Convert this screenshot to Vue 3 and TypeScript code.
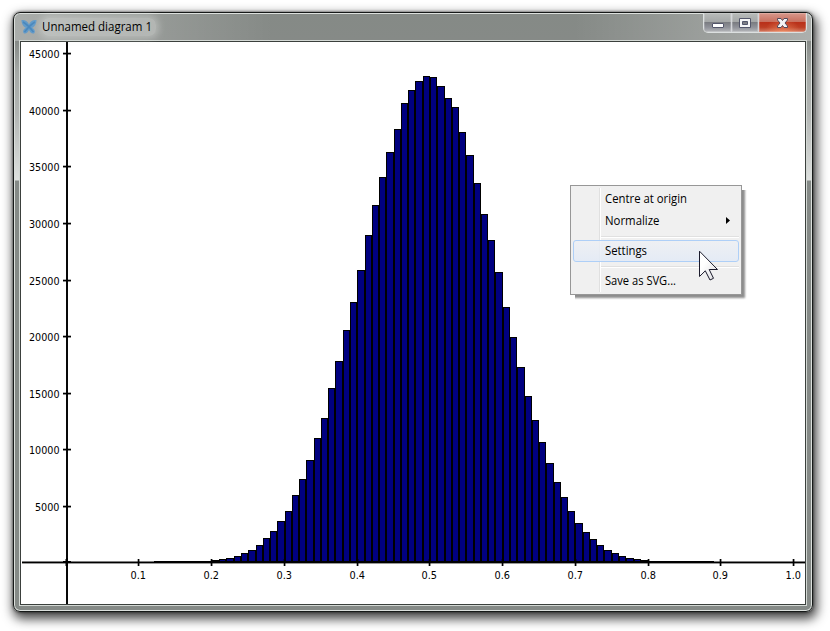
<script setup lang="ts">
const baseline = 562
const xAt = (bin: number) => Math.ceil(66 + 7.27 * bin)

const tops: number[] = [
  560, 559, 558, 556, 553, 550, 545, 538, 531, 521,
  511, 495, 479, 460, 438, 418, 388, 361, 330, 302,
  270, 235, 205, 177, 152, 129, 103, 90, 81, 76,
  77, 86, 98, 107, 132, 155, 183, 214, 240, 272,
  307, 337, 367, 396, 420, 442, 463, 482, 497, 511,
  523, 532, 539, 545, 550, 553, 556, 558, 559, 560,
]

const bars = tops.map((y, i) => {
  const x = xAt(20 + i)
  return { x, y, width: xAt(21 + i) - x, height: baseline - y }
})

const yTicks = [53, 110, 166, 223, 280, 336, 393, 449, 506].map((y, i) => {
  const value = 45000 - i * 5000
  return { value, y, width: value > 5000 ? 30.5 : 24.5 }
})

const xTicks = Array.from({ length: 10 }, (_, i) => ({
  label: ((i + 1) / 10).toFixed(1),
  x: Math.floor(66 + 72.75 * (i + 1)),
}))
</script>

<template>
  <main class="desktop">
    <section class="window">
      <header class="titlebar">
        <svg class="logo" width="16" height="16" viewBox="0 0 16 16">
          <path d="M.5 1 C4 .5 7 2.500 8 5.500 C9 2.500 12 .5 15.500 1 C15.500 5 13.500 8 11 8.800 C13.500 10 14.500 12 13.500 14 C11.500 15.500 9 13.500 8 11 C7 13.500 4.500 15.500 2.500 14 C1.500 12 2.500 10 5 8.800 C2.500 8 .5 5 .5 1Z" fill="#639bc9" />
          <path d="M2 3 Q7 6 12.500 13 M14 3 Q9 6 3.500 13" fill="none" stroke="#4a88bd" stroke-width="1.500" />
        </svg>
        <h1 class="title">
          <svg width="114" height="18"><text x="0" y="13" textLength="110" lengthAdjust="spacingAndGlyphs">Unnamed diagram 1</text></svg>
        </h1>
        <div class="controls">
          <button class="control minimize" aria-label="Minimize">
            <svg width="28" height="18"><rect x="8.500" y="9.500" width="11" height="4" rx=".5" fill="#fff" stroke="#53566a" /></svg>
          </button>
          <button class="control maximize" aria-label="Maximize">
            <svg width="26" height="18">
              <path fill-rule="evenodd" d="M7.500 4.500 H18.500 V13.500 H7.500Z M10.500 7.500 V10.500 H15.500 V7.500Z" fill="#f5f5f5" stroke="#53566a" />
            </svg>
          </button>
          <button class="control close" aria-label="Close">
            <svg width="46" height="18">
              <path d="M18.500 4.500 H22 L23.500 6.500 L25 4.500 H28.500 V6 L26 9 L28.500 12 V13.500 H25 L23.500 11.500 L22 13.500 H18.500 V12 L21 9 L18.500 6Z" fill="#f4f4f4" stroke="#55495a" />
            </svg>
          </button>
        </div>
      </header>

      <div class="client">
        <svg class="chart" width="784" height="562" viewBox="21 42 784 562">
          <g shape-rendering="crispEdges">
            <rect x="22" y="561" width="783" height="1" fill="#7f7f7f" />
            <rect x="22" y="562" width="783" height="1" />
            <rect x="22" y="563" width="783" height="1" fill-opacity=".4" />
            <rect x="66" y="42" width="2" height="562" fill="#080808" />
            <rect x="154" y="561" width="560" height="2" />
            <g v-for="bar in bars" :key="bar.x">
              <rect :x="bar.x" :y="bar.y" :width="bar.width" :height="bar.height" />
              <rect v-if="bar.height > 2" :x="bar.x + 1" :y="bar.y + 1" :width="bar.width - 2" :height="bar.height - 2" fill="#000080" />
            </g>
            <g v-for="tick in yTicks" :key="tick.value">
              <rect x="63" :y="tick.y" width="8" height="1" />
              <rect x="63" :y="tick.y - 1" width="8" height="1" fill-opacity=".3" />
              <rect x="63" :y="tick.y + 1" width="8" height="1" fill-opacity=".45" />
            </g>
            <rect x="63" y="561" width="8" height="2" />
            <rect x="65" y="559" width="3" height="7" fill-opacity=".5" />
            <rect x="66" y="558" width="2" height="8" />
            <g v-for="tick in xTicks" :key="tick.label">
              <rect :x="tick.x" y="559" width="1" height="7" />
              <rect :x="tick.x - 1" y="559" width="1" height="7" fill-opacity=".3" />
              <rect :x="tick.x + 1" y="559" width="1" height="7" fill-opacity=".4" />
            </g>
          </g>
          <g class="labels">
            <text v-for="tick in yTicks" :key="tick.value" :x="59.500 - tick.width" :y="tick.y + 5" :textLength="tick.width" lengthAdjust="spacingAndGlyphs">{{ tick.value }}</text>
            <text v-for="tick in xTicks" :key="tick.label" :x="tick.x - 7.500" y="579" textLength="15.500" lengthAdjust="spacingAndGlyphs">{{ tick.label }}</text>
          </g>
        </svg>
      </div>
    </section>

    <nav class="menu">
      <div class="item"><svg width="90" height="20"><text x="0" y="15" textLength="82" lengthAdjust="spacingAndGlyphs">Centre at origin</text></svg></div>
      <div class="item"><svg width="130" height="20"><text x="0" y="15" textLength="54.500" lengthAdjust="spacingAndGlyphs">Normalize</text><path d="M121 7 L125 10.500 L121 14Z" /></svg></div>
      <div class="separator"></div>
      <div class="item selected"><svg width="90" height="20"><text x="0" y="14" textLength="42" lengthAdjust="spacingAndGlyphs">Settings</text></svg></div>
      <div class="separator"></div>
      <div class="item"><svg width="90" height="20"><text x="0" y="15" textLength="71" lengthAdjust="spacingAndGlyphs">Save as SVG...</text></svg></div>
    </nav>

    <svg class="cursor" width="20" height="31" viewBox="0 0 20 31">
      <defs>
        <linearGradient id="arrow" x1="0" y1="0" x2="1" y2="1">
          <stop offset=".35" stop-color="#fff" />
          <stop offset="1" stop-color="#dcdcdf" />
        </linearGradient>
      </defs>
      <path d="M.5 1.200 V26.500 L6.300 20.800 L11 30 L14.500 28.300 L10.200 19.500 H18.500Z" fill="url(#arrow)" stroke="#1b1b2c" />
    </svg>
  </main>
</template>

<style>
body {
  background: #fff;
  overflow: hidden;
}
</style>

<style scoped>
.desktop {
  position: relative;
  box-sizing: border-box;
  width: 830px;
  height: 631px;
  padding: 12px 0 0 13px;
  overflow: hidden;
  font-family: "Open Sans", "Noto Sans", sans-serif;
}
.window {
  box-sizing: border-box;
  width: 800px;
  height: 600px;
  border: 1px solid #161918;
  border-radius: 7px;
  padding: 0 6px;
  background:
    linear-gradient(90deg, rgba(255, 255, 255, .3), transparent 260px, transparent 560px, rgba(255, 255, 255, .32)) top / 100% 28px no-repeat,
    linear-gradient(#858a86 0, #868a87 28px, #a6aaa7 60px, #b2b5b3 100px, #dde0de 167px, #858a87 168px, #858a87);
  box-shadow:
    inset 0 0 0 1px #dce0dd,
    0 0 3px rgba(0, 0, 0, .7),
    2px 5px 11px 2px rgba(0, 0, 0, .72);
}
.titlebar {
  display: flex;
  align-items: flex-start;
  height: 28px;
}
.logo {
  margin: 6px 0 0 1px;
}
.title {
  display: flex;
  flex: 1;
  margin: 5px 0 0 5px;
}
.title svg {
  font-size: 12px;
  font-weight: 400;
  background: rgba(225, 229, 225, .38);
  box-shadow: 0 0 7px 3px rgba(225, 229, 225, .38);
  border-radius: 7px;
}
.controls {
  display: flex;
  box-sizing: border-box;
  width: 104px;
  height: 20px;
  margin-right: -1px;
  border: 1px solid #dce0e0;
  border-top: 0;
  border-radius: 0 0 5px 5px;
  overflow: hidden;
}
.control {
  box-sizing: border-box;
  height: 19px;
  padding: 0;
  border: 0;
  border-right: 1px solid #d4d6da;
  background: linear-gradient(#b9bcba 0, #a5a8a8 45%, #77797e 46%, #909299 75%, #b5b7ba);
  box-shadow: inset 0 0 0 1px rgba(255, 255, 255, .2);
}
.control svg {
  display: block;
}
.minimize {
  width: 28px;
}
.maximize {
  width: 27px;
}
.close {
  width: 47px;
  border-right: 0;
  background:
    radial-gradient(ellipse at 50% 110%, rgba(246, 145, 100, .7), transparent 55%),
    linear-gradient(#d8988c 0, #c87160 45%, #b92e18 46%, #bd3e24 75%, #d37d65);
}
.client {
  box-sizing: border-box;
  width: 786px;
  height: 564px;
  border: 1px solid #3b403d;
  background: #fff;
  box-shadow: 0 0 0 1px #d3d8d4;
}
.chart {
  display: block;
}
.labels {
  font-family: "DejaVu Sans Condensed", "DejaVu Sans", sans-serif;
  font-size: 10.5px;
}
.menu {
  position: absolute;
  left: 570px;
  top: 185px;
  box-sizing: border-box;
  width: 172px;
  height: 110px;
  border: 1px solid #979797;
  padding: 2px;
  background: linear-gradient(90deg, #f0f0f0 28px, #e0e0e0 28px, #e0e0e0 29px, #fff 29px, #fff 30px, #f0f0f0 30px) 0 2px / 100% 104px no-repeat #f0f0f0;
  box-shadow: 2px 2px 2px 1px rgba(0, 0, 0, .45);
  clip-path: polygon(0 0, 172px 0, 172px 5px, 178px 5px, 178px 116px, 5px 116px, 5px 110px, 0 110px);
  font-size: 12px;
}
.item {
  box-sizing: border-box;
  height: 22px;
  padding: 0 0 0 32px;
}
.item svg {
  display: block;
}
.separator {
  height: 1px;
  margin: 4px 0 2px 28px;
  border-top: 1px solid #e0e0e0;
  background: #fff;
}
.selected {
  border: 1px solid #aecff7;
  border-radius: 3px;
  padding-left: 31px;
  background: linear-gradient(rgba(238, 240, 244, .8), rgba(226, 234, 246, .85));
}
.cursor {
  position: absolute;
  left: 699px;
  top: 250px;
}
</style>
